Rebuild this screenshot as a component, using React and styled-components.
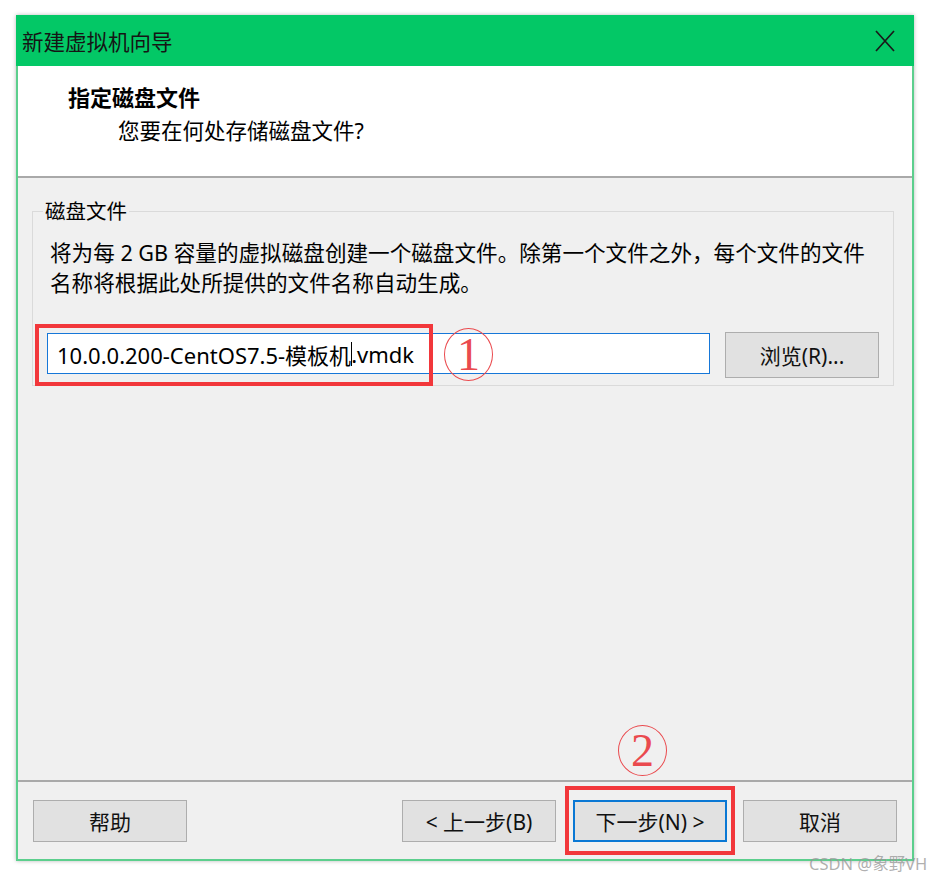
import React from 'react'
import styled, { createGlobalStyle } from 'styled-components'

const GlobalStyle = createGlobalStyle`
  html, body { margin: 0; padding: 0; background: #fff; }
  body { font-family: "Noto Sans", "Noto Sans CJK SC", sans-serif; color: #000; }
  * { box-sizing: border-box; }
`

const Page = styled.div`
  position: relative;
  width: 935px;
  height: 877px;
  padding: 15px 0 0 16px;
`

const Dialog = styled.div`
  width: 898px;
  height: 846px;
  border: 2px solid #5ccf8d;
  border-top: none;
  background: #f0f0f0;
  display: flex;
  flex-direction: column;
  box-shadow: 0 0 4px rgba(0, 0, 0, 0.28);
`

const TitleBar = styled.div`
  height: 51px;
  margin: 0 -2px;
  padding: 0 19px 0 6px;
  background: #03c866;
  display: flex;
  align-items: center;
  justify-content: space-between;
  font-size: 21.5px;
  color: #151515;
`

const Header = styled.div`
  height: 112px;
  background: #fff;
  border-bottom: 2px solid #a9a9a9;
  padding: 16px 0 0 50px;
`

const HeaderTitle = styled.div`
  font-size: 22px;
  font-weight: 700;
  line-height: 30px;
`

const HeaderSub = styled.div`
  margin-top: 4px;
  padding-left: 50px;
  font-size: 21.5px;
  line-height: 30px;
`

const Body = styled.div`
  flex: 1;
  padding: 18px 18px 0 14px;
`

const Group = styled.fieldset`
  margin: 0;
  padding: 0 14px 7px;
  border: 1px solid #dadada;
  min-width: 0;
`

const Legend = styled.legend`
  padding: 0 2px;
  margin-left: -4px;
  font-size: 20.5px;
  line-height: 30px;
`

const Desc = styled.div`
  margin-top: 12px;
  padding-left: 3px;
  font-size: 21.6px;
  line-height: 30px;
  white-space: nowrap;
`

const FileRow = styled.div`
  position: relative;
  margin-top: 34px;
  display: flex;
  align-items: flex-start;
  gap: 15px;
`

const FileField = styled.div`
  width: 663px;
  height: 41px;
  margin-top: 1px;
  padding-left: 9px;
  background: #fff;
  border: 1px solid #1677d8;
  display: flex;
  align-items: center;
  font-size: 22px;
  white-space: nowrap;
`

const Caret = styled.span`
  display: inline-block;
  width: 1px;
  height: 24px;
  margin: 0 -1px 0 0;
  background: #000;
  vertical-align: middle;
`

const Button = styled.button`
  width: 154px;
  height: ${p => (p.$tall ? 46 : 42)}px;
  margin-left: ${p => p.$gap || 0};
  padding: 0;
  background: #e1e1e1;
  border: ${p => (p.$primary ? '2px solid #0a78d4' : '1px solid #adadad')};
  font-family: inherit;
  font-size: 21px;
  color: #111;
  position: relative;
`

const Footer = styled.div`
  height: 79px;
  border-top: 2px solid #a9a9a9;
  padding: 18px 15px 0;
  display: flex;
  align-items: flex-start;
`

const RedFrame = styled.div`
  position: absolute;
  border: 4px solid #f2373b;
  pointer-events: none;
`

const Mark = styled.span`
  position: absolute;
  width: 49px;
  height: 53px;
  border: 1.5px solid #ea4a4e;
  border-radius: 50%;
  display: flex;
  align-items: center;
  justify-content: center;
  font-family: "Liberation Serif", serif;
  font-size: 46px;
  line-height: 1;
  color: #ea4a4e;
`

const Watermark = styled.div`
  position: absolute;
  left: 809px;
  top: 851px;
  font-size: 16.5px;
  color: rgba(150, 150, 150, 0.75);
  white-space: nowrap;
`

const CloseIcon = () => (
  <svg width="20" height="22" viewBox="0 0 20 22">
    <path d="M1 1 L19 21 M19 1 L1 21" stroke="#1a1a1a" strokeWidth="1.7" fill="none" />
  </svg>
)

export default function App() {
  return (
    <Page>
      <GlobalStyle />
      <Dialog>
        <TitleBar>
          <span>新建虚拟机向导</span>
          <CloseIcon />
        </TitleBar>
        <Header>
          <HeaderTitle>指定磁盘文件</HeaderTitle>
          <HeaderSub>您要在何处存储磁盘文件?</HeaderSub>
        </Header>
        <Body>
          <Group>
            <Legend>磁盘文件</Legend>
            <Desc>
              将为每 2 GB 容量的虚拟磁盘创建一个磁盘文件。除第一个文件之外，每个文件的文件
              <br />
              名称将根据此处所提供的文件名称自动生成。
            </Desc>
            <FileRow>
              <FileField>
                10.0.0.200-CentOS7.5-模板机<Caret />.vmdk
              </FileField>
              <Button $tall>浏览(R)...</Button>
              <RedFrame style={{ left: -12, top: -8, width: 398, height: 62 }} />
              <Mark style={{ left: 397, top: -4 }}>1</Mark>
            </FileRow>
          </Group>
        </Body>
        <Footer>
          <Button>帮助</Button>
          <Button $gap="auto">&lt; 上一步(B)</Button>
          <Button $primary $gap="17px">
            下一步(N) &gt;
            <RedFrame style={{ left: -10, top: -16, width: 170, height: 69 }} />
            <Mark style={{ left: 43, top: -77, height: 51 }}>2</Mark>
          </Button>
          <Button $gap="16px">取消</Button>
        </Footer>
      </Dialog>
      <Watermark>CSDN @象野VH</Watermark>
    </Page>
  )
}
